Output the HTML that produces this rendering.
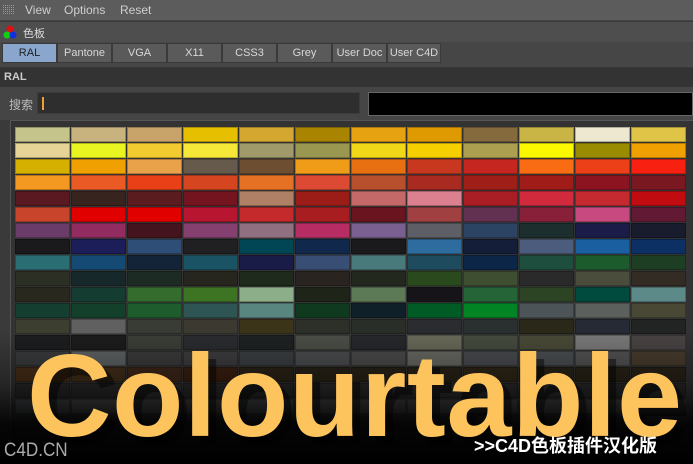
<!DOCTYPE html>
<html><head><meta charset="utf-8"><style>
*{margin:0;padding:0;box-sizing:border-box}
body{width:693px;height:464px;overflow:hidden;background:#3a3a3a;font-family:"Liberation Sans","Noto Sans CJK SC",sans-serif;position:relative}
.menu{position:absolute;left:0;top:0;width:693px;height:21px;background:#5c5c5c;border-bottom:1px solid #444;color:#cfcfcf;font-size:12px}
.menu span{position:absolute;top:3px}
.hdr{position:absolute;left:0;top:22px;width:693px;height:20px;background:#4e4e4e;color:#ddd;font-size:11px}
.tabs{position:absolute;left:0;top:42px;width:693px;height:25px;background:#464646}
.tab{position:absolute;top:1px;height:20px;background:#5a5a5a;border:1px solid #3a3a3a;color:#d8d8d8;font-size:11px;text-align:center;line-height:18px}
.ral{position:absolute;left:0;top:68px;width:693px;height:19px;background:#333;color:#ccc;font-weight:bold;font-size:11px;padding:3px 4px}
.srch{position:absolute;left:0;top:87px;width:693px;height:33px;background:#454545}
.panel{position:absolute;left:10px;top:120px;width:683px;height:344px;background:#333;border:1px solid #555;border-right:none}
.grid{position:absolute;left:15px;top:127px;width:672px}
.row{display:flex;height:16px}
.row div{width:55px;height:15px;margin-right:1px;border:1px solid rgba(0,0,0,.25)}
.ov{position:absolute;left:0;top:330px;width:693px;height:134px;background:linear-gradient(to bottom,rgba(0,0,0,0) 0%,rgba(0,0,0,.35) 40%,rgba(0,0,0,.9) 70%,#000 100%)}
.big{position:absolute;left:27px;top:328px;font-size:117px;font-weight:bold;color:#fdc35c;letter-spacing:0.5px;text-shadow:8px 8px 0 rgba(0,0,0,.45);white-space:nowrap}
</style></head><body>
<div class="menu">
<svg style="position:absolute;left:3px;top:5px" width="12" height="10"><pattern id="p" width="2" height="2" patternUnits="userSpaceOnUse"><rect width="1" height="1" fill="#999"/></pattern><rect width="12" height="10" fill="url(#p)"/></svg>
<span style="left:25px">View</span><span style="left:64px">Options</span><span style="left:120px">Reset</span></div>
<div class="hdr"><svg style="position:absolute;left:3px;top:3px" width="14" height="14"><circle cx="7" cy="4" r="3.5" fill="#e01010"/><circle cx="4" cy="10" r="3.5" fill="#10d010"/><circle cx="10" cy="10" r="3.5" fill="#1030e0"/></svg><span style="position:absolute;left:23px;top:3px">色板</span></div>
<div class="tabs">
<div class="tab" style="left:2px;width:55px;background:#8aa6cc;color:#222">RAL</div>
<div class="tab" style="left:57px;width:55px">Pantone</div>
<div class="tab" style="left:112px;width:55px">VGA</div>
<div class="tab" style="left:167px;width:55px">X11</div>
<div class="tab" style="left:222px;width:55px">CSS3</div>
<div class="tab" style="left:277px;width:55px">Grey</div>
<div class="tab" style="left:332px;width:55px">User Doc</div>
<div class="tab" style="left:387px;width:54px">User C4D</div>
</div>
<div class="ral">RAL</div>
<div class="srch"><span style="position:absolute;left:9px;top:9px;color:#bbb;font-size:12px">搜索</span>
<div style="position:absolute;left:37px;top:5px;width:323px;height:22px;background:#2e2e2e;border:1px solid #3c3c3c"><div style="position:absolute;left:4px;top:4px;width:2px;height:13px;background:#f0a030"></div></div>
<div style="position:absolute;left:368px;top:5px;width:325px;height:24px;background:#000;border:1px solid #666"></div></div>
<div class="panel"></div>
<div class="grid">
<div class="row"><div style="background:#c5c48a"></div><div style="background:#c8b27e"></div><div style="background:#c9a46a"></div><div style="background:#e6c000"></div><div style="background:#d4a830"></div><div style="background:#a88400"></div><div style="background:#e6a210"></div><div style="background:#de9a00"></div><div style="background:#856a3e"></div><div style="background:#c9b446"></div><div style="background:#ede8cf"></div><div style="background:#e0c448"></div></div>
<div class="row"><div style="background:#e6d496"></div><div style="background:#e8f520"></div><div style="background:#f2cb30"></div><div style="background:#f6e838"></div><div style="background:#a09a6a"></div><div style="background:#9a9850"></div><div style="background:#f0d818"></div><div style="background:#f6cf00"></div><div style="background:#aca050"></div><div style="background:#fbf800"></div><div style="background:#9a8c00"></div><div style="background:#f0a000"></div></div>
<div class="row"><div style="background:#d6b000"></div><div style="background:#f0a000"></div><div style="background:#eaa24a"></div><div style="background:#665a4c"></div><div style="background:#6e4e30"></div><div style="background:#f09c18"></div><div style="background:#e87010"></div><div style="background:#c8381e"></div><div style="background:#c62620"></div><div style="background:#fa6c14"></div><div style="background:#ec4018"></div><div style="background:#f82010"></div></div>
<div class="row"><div style="background:#f39820"></div><div style="background:#ea5a24"></div><div style="background:#ea4018"></div><div style="background:#d44520"></div><div style="background:#e57224"></div><div style="background:#dc4a34"></div><div style="background:#b8502e"></div><div style="background:#a82a20"></div><div style="background:#a01e18"></div><div style="background:#a01c18"></div><div style="background:#8c1420"></div><div style="background:#7a1822"></div></div>
<div class="row"><div style="background:#5a1820"></div><div style="background:#38241e"></div><div style="background:#5a1c1e"></div><div style="background:#74141e"></div><div style="background:#b08066"></div><div style="background:#9c1c18"></div><div style="background:#c46868"></div><div style="background:#dc8090"></div><div style="background:#a81e24"></div><div style="background:#d02a3c"></div><div style="background:#c42a30"></div><div style="background:#c00c10"></div></div>
<div class="row"><div style="background:#c8452c"></div><div style="background:#e00000"></div><div style="background:#e00000"></div><div style="background:#b81530"></div><div style="background:#c42a2c"></div><div style="background:#a81e20"></div><div style="background:#6a1420"></div><div style="background:#a04040"></div><div style="background:#623050"></div><div style="background:#88203a"></div><div style="background:#c84880"></div><div style="background:#621a34"></div></div>
<div class="row"><div style="background:#6a3c6a"></div><div style="background:#922c60"></div><div style="background:#44141e"></div><div style="background:#864070"></div><div style="background:#907080"></div><div style="background:#b82c64"></div><div style="background:#7a6090"></div><div style="background:#5e5e66"></div><div style="background:#2c4464"></div><div style="background:#1c2e2e"></div><div style="background:#1c1c48"></div><div style="background:#181c2c"></div></div>
<div class="row"><div style="background:#1a1a1c"></div><div style="background:#1c1e5a"></div><div style="background:#2e4e78"></div><div style="background:#202022"></div><div style="background:#004654"></div><div style="background:#10284c"></div><div style="background:#1a1a1c"></div><div style="background:#2e6ca0"></div><div style="background:#141e38"></div><div style="background:#4c5c7c"></div><div style="background:#1a60a0"></div><div style="background:#0c3064"></div></div>
<div class="row"><div style="background:#2a6e74"></div><div style="background:#154a74"></div><div style="background:#142438"></div><div style="background:#1a5464"></div><div style="background:#1a1c48"></div><div style="background:#384e74"></div><div style="background:#487a7c"></div><div style="background:#1e4c5e"></div><div style="background:#0c2648"></div><div style="background:#1e4e3e"></div><div style="background:#1c5c2c"></div><div style="background:#1e3e24"></div></div>
<div class="row"><div style="background:#2c3024"></div><div style="background:#16282a"></div><div style="background:#1c2c24"></div><div style="background:#26261e"></div><div style="background:#1e2a1c"></div><div style="background:#2a2420"></div><div style="background:#22281e"></div><div style="background:#2a4a1e"></div><div style="background:#3e4e30"></div><div style="background:#2a2a2a"></div><div style="background:#4a4c3c"></div><div style="background:#322c24"></div></div>
<div class="row"><div style="background:#28281e"></div><div style="background:#143c30"></div><div style="background:#346c2e"></div><div style="background:#3c7424"></div><div style="background:#8cae88"></div><div style="background:#1e2418"></div><div style="background:#5c7a56"></div><div style="background:#161418"></div><div style="background:#246436"></div><div style="background:#2c4424"></div><div style="background:#004a3e"></div><div style="background:#5c8a88"></div></div>
<div class="row"><div style="background:#143e30"></div><div style="background:#12402a"></div><div style="background:#1e5c2e"></div><div style="background:#2e5454"></div><div style="background:#5a8680"></div><div style="background:#103a20"></div><div style="background:#102028"></div><div style="background:#005c24"></div><div style="background:#008424"></div><div style="background:#4c5458"></div><div style="background:#5c605c"></div><div style="background:#484834"></div></div>
<div class="row"><div style="background:#3c3e30"></div><div style="background:#606060"></div><div style="background:#383c34"></div><div style="background:#3c3a30"></div><div style="background:#3c3418"></div><div style="background:#2c3028"></div><div style="background:#2a2e28"></div><div style="background:#2a2c30"></div><div style="background:#2a3030"></div><div style="background:#2a2818"></div><div style="background:#262a34"></div><div style="background:#222424"></div></div>
<div class="row"><div style="background:#1c1e20"></div><div style="background:#1c1c1c"></div><div style="background:#3c3e38"></div><div style="background:#2a2c30"></div><div style="background:#1e2222"></div><div style="background:#4c4e48"></div><div style="background:#26282c"></div><div style="background:#6a6a5a"></div><div style="background:#464c40"></div><div style="background:#4a4a38"></div><div style="background:#7a7a7a"></div><div style="background:#4a4444"></div></div>
<div class="row"><div style="background:#3a3c3e"></div><div style="background:#606466"></div><div style="background:#3c3c3c"></div><div style="background:#3e3e40"></div><div style="background:#3c4044"></div><div style="background:#4c4e50"></div><div style="background:#4c4c4c"></div><div style="background:#6a6a64"></div><div style="background:#4a4c50"></div><div style="background:#4c5054"></div><div style="background:#545454"></div><div style="background:#4a3e2e"></div></div>
<div class="row"><div style="background:#4a3018"></div><div style="background:#44301a"></div><div style="background:#40281a"></div><div style="background:#3c2010"></div><div style="background:#2c2418"></div><div style="background:#2a2418"></div><div style="background:#2a2418"></div><div style="background:#2a2418"></div><div style="background:#302818"></div><div style="background:#2a2418"></div><div style="background:#2a2418"></div><div style="background:#2a2418"></div></div>
<div class="row"><div style="background:#2a2a2c"></div><div style="background:#2c2c2c"></div><div style="background:#303030"></div><div style="background:#2c2c2e"></div><div style="background:#2a2a2a"></div><div style="background:#2e2e2e"></div><div style="background:#2c2c2c"></div><div style="background:#303030"></div><div style="background:#2c2c2c"></div><div style="background:#2e2e2e"></div><div style="background:#2c2c2c"></div><div style="background:#2a2a2a"></div></div>
<div class="row"><div style="background:#4a4c50"></div><div style="background:#505050"></div><div style="background:#4a4a4c"></div><div style="background:#48484a"></div><div style="background:#4a4c4e"></div><div style="background:#4c4c4c"></div><div style="background:#4a4a4a"></div><div style="background:#4c4c4c"></div><div style="background:#4a4a4a"></div><div style="background:#4c4c4c"></div><div style="background:#4a4a4a"></div><div style="background:#4a4a4a"></div></div>
</div>
<div class="ov"></div>
<div class="big">Colourtable</div>
<div style="position:absolute;left:4px;top:440px;color:#aaa;font-size:19px;transform:scaleX(.9);transform-origin:left">C4D.CN</div>
<div style="position:absolute;left:474px;top:432px;color:#fff;font-size:18px;font-weight:bold;font-family:'Liberation Sans','Noto Sans CJK SC',sans-serif">&gt;&gt;C4D色板插件汉化版</div>
</body></html>
